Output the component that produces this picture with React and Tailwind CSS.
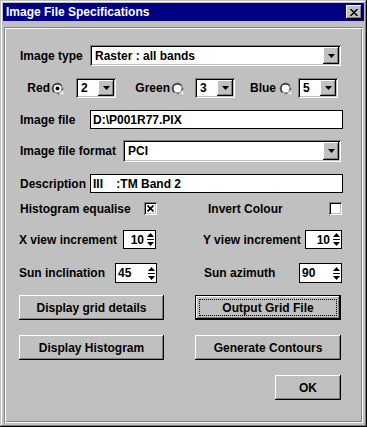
import React from 'react';

const raised = 'bg-[#c0c0c0] shadow-[inset_-1px_-1px_0_#000,inset_1px_1px_0_#fff,inset_-2px_-2px_0_#808080]';
const sunken = 'bg-white shadow-[inset_1px_1px_0_#808080,inset_-1px_-1px_0_#fff,inset_2px_2px_0_#000,inset_-2px_-2px_0_#c0c0c0]';

function DownArrow() {
  return (
    <svg width="7" height="4" viewBox="0 0 7 4">
      <polygon points="0,0 7,0 3.5,4" fill="#000" />
    </svg>
  );
}

function Combo({ value, w, h = 21 }) {
  return (
    <div className={`${sunken} flex items-stretch p-[2px]`} style={{ width: w, height: h }}>
      <div className="flex-1 flex items-center pl-[3px] text-black">{value}</div>
      <div className={`${raised} w-[16px] flex items-center justify-center`}>
        <DownArrow />
      </div>
    </div>
  );
}

function Field({ value }) {
  return (
    <div className="w-[253px] h-[19px] bg-white border border-black flex items-center pl-[2px] whitespace-pre">
      {value}
    </div>
  );
}

function Radio({ checked }) {
  return (
    <svg width="13" height="13" viewBox="0 0 13 13" className="block shrink-0">
      <circle cx="6.5" cy="6.5" r="6" fill="#808080" />
      <path d="M2.3 10.7 A6 6 0 0 0 10.7 2.3 L12.5 12.5 Z" fill="#fff" />
      <circle cx="6.5" cy="6.5" r="5" fill="#000" />
      <path d="M3 10 A5 5 0 0 0 10 3 L11.5 11.5 Z" fill="#c0c0c0" />
      <circle cx="6.5" cy="6.5" r="4" fill="#fff" />
      {checked && <circle cx="6.5" cy="6.5" r="2" fill="#000" />}
    </svg>
  );
}

function Check({ checked }) {
  return (
    <div className={`${sunken} w-[13px] h-[13px] flex items-center justify-center shrink-0`}>
      {checked && (
        <svg width="7" height="7" viewBox="0 0 7 7">
          <path d="M0.5 0.5 L6.5 6.5 M6.5 0.5 L0.5 6.5" stroke="#000" strokeWidth="1.6" />
        </svg>
      )}
    </div>
  );
}

function SpinArrows() {
  return (
    <svg width="7" height="15" viewBox="0 0 7 15">
      <polygon points="3.5,1 0,5 7,5" fill="#000" />
      <rect x="0" y="7" width="7" height="1" fill="#000" />
      <polygon points="0,10 7,10 3.5,14" fill="#000" />
    </svg>
  );
}

function Spinner({ value, w, h = 19, right }) {
  return (
    <div className="bg-white border border-black flex items-center pr-[1px]" style={{ width: w, height: h }}>
      <div className={`flex-1 ${right ? 'text-right pr-[3px]' : 'pl-[2px]'}`}>{value}</div>
      <SpinArrows />
    </div>
  );
}

function Button({ label, w, isDefault }) {
  if (isDefault) {
    return (
      <div className="border border-black h-[25px] flex" style={{ width: w }}>
        <div className={`${raised} flex-1 flex p-[3px]`}>
          <div className="flex-1 border border-dotted border-black flex items-center justify-center">{label}</div>
        </div>
      </div>
    );
  }
  return (
    <div className={`${raised} h-[25px] flex items-center justify-center`} style={{ width: w }}>
      {label}
    </div>
  );
}

export default function App() {
  return (
    <div className="w-[367px] h-[427px] bg-[#c0c0c0] p-[3px] flex flex-col font-['Liberation_Sans',Arial,sans-serif] font-bold text-[12px] leading-none text-black shadow-[inset_-1px_-1px_0_#000,inset_1px_1px_0_#c0c0c0,inset_-2px_-2px_0_#808080,inset_2px_2px_0_#fff]">
      {/* title bar */}
      <div className="h-[18px] bg-[#000080] flex items-center justify-between pl-[3px] pr-[2px]">
        <span className="text-white">Image File Specifications</span>
        <div className={`${raised} w-[16px] h-[14px] flex items-center justify-center`}>
          <svg width="8" height="7" viewBox="0 0 8 7">
            <path d="M0.5 0 L7.5 7 M7.5 0 L0.5 7" stroke="#000" strokeWidth="1.5" />
          </svg>
        </div>
      </div>

      {/* panel */}
      <div className="mt-[6px] ml-[1px] w-[359px] h-[396px] flex flex-col shadow-[inset_1px_1px_0_#808080,inset_-1px_-1px_0_#fff,inset_2px_2px_0_#fff,inset_-2px_-2px_0_#808080]">
        <div className="mt-[18px] ml-[16px] h-[21px] flex items-center">
          <span className="w-[70px]">Image type</span>
          <Combo value="Raster : all bands" w={251} />
        </div>

        <div className="mt-[12px] ml-[16px] h-[20px] flex items-center">
          <span className="w-[30px] text-right">Red</span>
          <span className="ml-[1px]"><Radio checked /></span>
          <span className="ml-[12px]"><Combo value="2" w={40} h={20} /></span>
          <span className="w-[54px] text-right">Green</span>
          <span className="ml-[1px]"><Radio /></span>
          <span className="ml-[11px]"><Combo value="3" w={40} h={20} /></span>
          <span className="w-[41px] text-right">Blue</span>
          <span className="ml-[3px]"><Radio /></span>
          <span className="ml-[6px]"><Combo value="5" w={40} h={20} /></span>
        </div>

        <div className="mt-[12px] ml-[16px] h-[19px] flex items-center">
          <span className="w-[70px]">Image file</span>
          <Field value="D:\P001R77.PIX" />
        </div>

        <div className="mt-[11px] ml-[16px] h-[22px] flex items-center">
          <span className="w-[103px]">Image file format</span>
          <Combo value="PCI" w={218} h={22} />
        </div>

        <div className="mt-[12px] ml-[16px] h-[19px] flex items-center">
          <span className="w-[70px]">Description</span>
          <Field value="III    :TM Band 2" />
        </div>

        <div className="mt-[9px] ml-[16px] h-[13px] flex items-center">
          <span className="w-[124px]">Histogram equalise</span>
          <Check checked />
          <span className="ml-[51px] w-[121px]">Invert Colour</span>
          <Check />
        </div>

        <div className="mt-[15px] ml-[15px] h-[19px] flex items-center">
          <span className="w-[104px]">X view increment</span>
          <Spinner value="10" w={33} right />
          <span className="ml-[47px] w-[102px]">Y view increment</span>
          <Spinner value="10" w={37} right />
        </div>

        <div className="mt-[14px] ml-[15px] h-[20px] flex items-center">
          <span className="w-[96px]">Sun inclination</span>
          <Spinner value="45" w={42} h={20} />
          <span className="ml-[47px] w-[95px]">Sun azimuth</span>
          <Spinner value="90" w={43} h={20} />
        </div>

        <div className="mt-[12px] ml-[15px] flex">
          <Button label="Display grid details" w={145} />
          <span className="ml-[31px]"><Button label="Output Grid File" w={146} isDefault /></span>
        </div>

        <div className="mt-[15px] ml-[15px] flex">
          <Button label="Display Histogram" w={145} />
          <span className="ml-[31px]"><Button label="Generate Contours" w={146} /></span>
        </div>

        <div className="mt-[15px] ml-[271px] flex">
          <Button label="OK" w={66} />
        </div>
      </div>
    </div>
  );
}
